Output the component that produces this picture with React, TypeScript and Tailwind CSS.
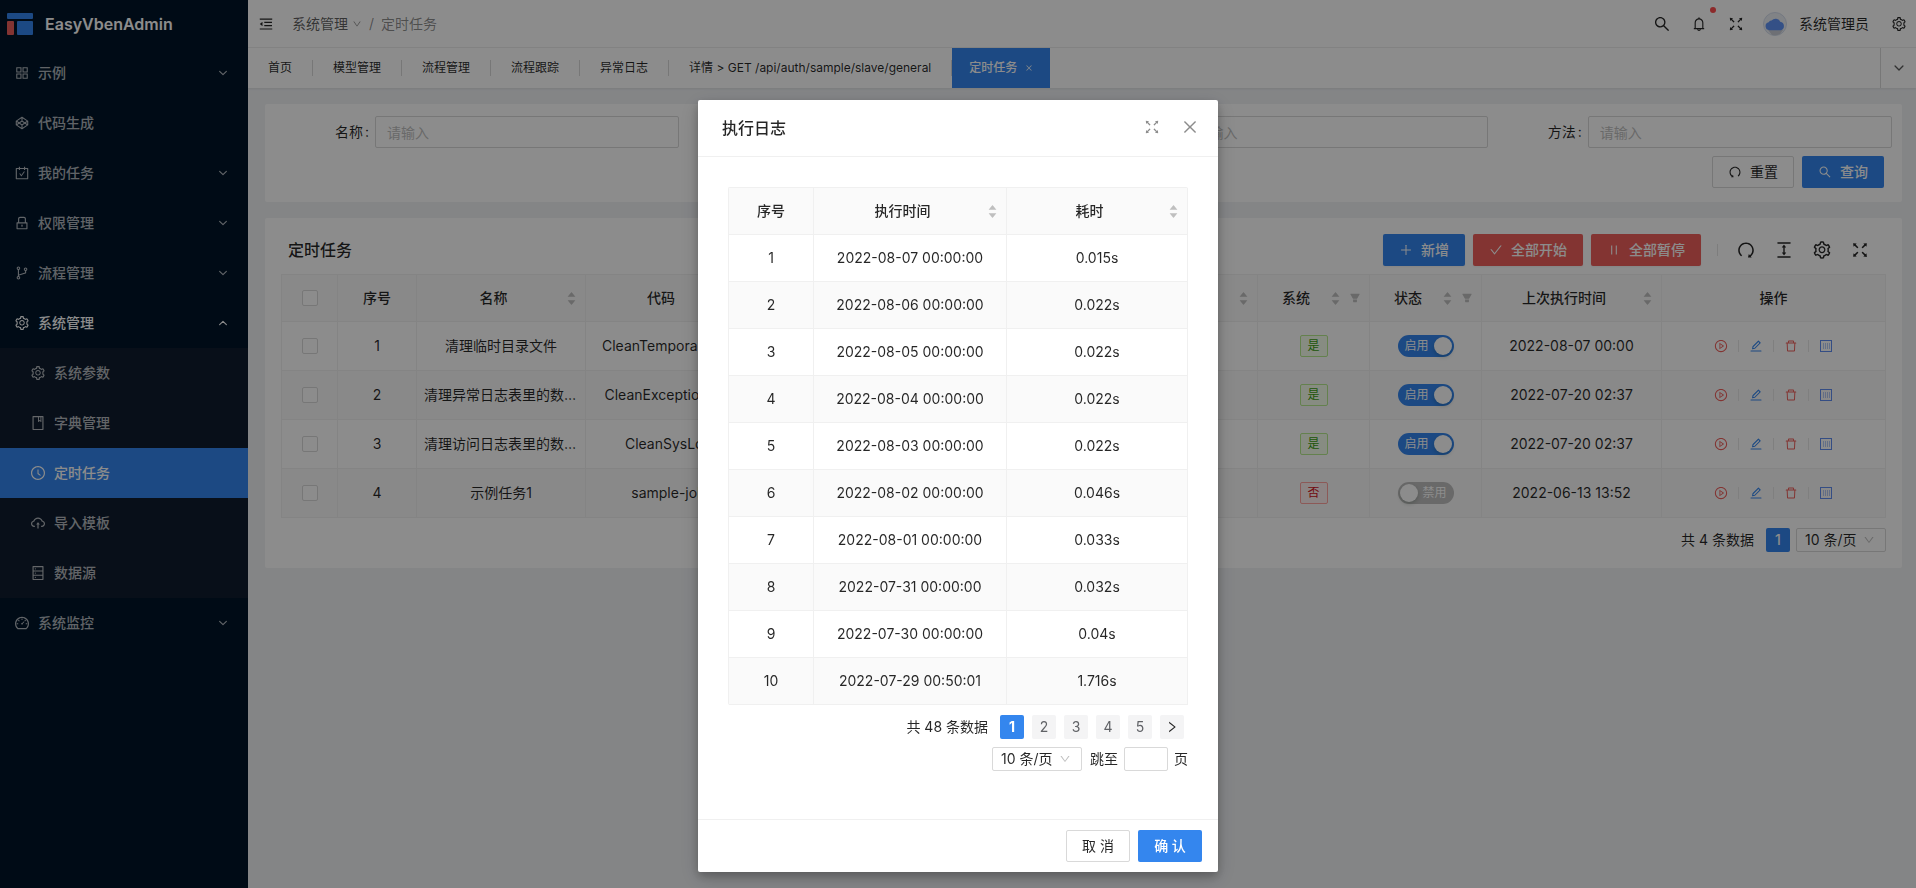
import { useState } from "react";
import type { ReactNode } from "react";
import type { IconType } from "react-icons";
import {
  AiFillCaretDown,
  AiFillCaretUp,
  AiFillFilter,
  AiOutlineAppstore,
  AiOutlineBell,
  AiOutlineBook,
  AiOutlineBranches,
  AiOutlineCarryOut,
  AiOutlineCheck,
  AiOutlineClockCircle,
  AiOutlineClose,
  AiOutlineCloudUpload,
  AiOutlineCodepen,
  AiOutlineColumnHeight,
  AiOutlineDashboard,
  AiOutlineDatabase,
  AiOutlineDelete,
  AiOutlineDown,
  AiOutlineEdit,
  AiOutlineFullscreen,
  AiOutlineLock,
  AiOutlineMenuFold,
  AiOutlinePause,
  AiOutlinePlayCircle,
  AiOutlinePlus,
  AiOutlineRedo,
  AiOutlineRight,
  AiOutlineSearch,
  AiOutlineSetting,
  AiOutlineUndo,
} from "react-icons/ai";
import { IoChevronDown, IoChevronUp } from "react-icons/io5";

type MenuItem = { label: string; icon: IconType; leaf?: boolean; children?: MenuItem[] };

const menu: MenuItem[] = [
  { label: "示例", icon: AiOutlineAppstore },
  { label: "代码生成", icon: AiOutlineCodepen, leaf: true },
  { label: "我的任务", icon: AiOutlineCarryOut },
  { label: "权限管理", icon: AiOutlineLock },
  { label: "流程管理", icon: AiOutlineBranches },
  {
    label: "系统管理",
    icon: AiOutlineSetting,
    children: [
      { label: "系统参数", icon: AiOutlineSetting },
      { label: "字典管理", icon: AiOutlineBook },
      { label: "定时任务", icon: AiOutlineClockCircle },
      { label: "导入模板", icon: AiOutlineCloudUpload },
      { label: "数据源", icon: AiOutlineDatabase },
    ],
  },
  { label: "系统监控", icon: AiOutlineDashboard },
];

const tabs = [
  "首页",
  "模型管理",
  "流程管理",
  "流程跟踪",
  "异常日志",
  "详情 > GET /api/auth/sample/slave/general",
];

const jobs = [
  { name: "清理临时目录文件", code: "CleanTemporaryJob", system: true, enabled: true, last: "2022-08-07 00:00" },
  { name: "清理异常日志表里的数据记录", code: "CleanExceptionLog", system: true, enabled: true, last: "2022-07-20 02:37" },
  { name: "清理访问日志表里的数据记录", code: "CleanSysLog", system: true, enabled: true, last: "2022-07-20 02:37" },
  { name: "示例任务1", code: "sample-job", system: false, enabled: false, last: "2022-06-13 13:52" },
];

const logs = [
  ["2022-08-07 00:00:00", "0.015s"],
  ["2022-08-06 00:00:00", "0.022s"],
  ["2022-08-05 00:00:00", "0.022s"],
  ["2022-08-04 00:00:00", "0.022s"],
  ["2022-08-03 00:00:00", "0.022s"],
  ["2022-08-02 00:00:00", "0.046s"],
  ["2022-08-01 00:00:00", "0.033s"],
  ["2022-07-31 00:00:00", "0.032s"],
  ["2022-07-30 00:00:00", "0.04s"],
  ["2022-07-29 00:50:01", "1.716s"],
];

function Logo() {
  return (
    <svg width="26" height="22" viewBox="0 0 26 22" aria-hidden="true">
      <rect width="26" height="6" rx="1" fill="#3486ee" />
      <rect y="8" width="7" height="14" rx="1" fill="#ee5f5b" />
      <rect x="10" y="8" width="16" height="14" rx="1" fill="#3486ee" />
    </svg>
  );
}

function Avatar() {
  return (
    <svg width="24" height="24" viewBox="0 0 24 24" aria-hidden="true">
      <circle cx="12" cy="12" r="11.5" fill="#eceff5" stroke="#d3dcec" />
      <path d="M5 18h15l-3 4a11 11 0 0 1-8 1z" fill="#c9cdd6" />
      <path
        d="M6.4 18.2a4 4 0 0 1-.7-7.9 2.8 2.8 0 0 1 2.9-1.7 5 5 0 0 1 8.6 1.2 4.3 4.3 0 0 1 .6 8.4z"
        fill="#5f93f5"
      />
    </svg>
  );
}

function LogIcon() {
  return (
    <svg width="14" height="14" viewBox="0 0 14 14" fill="none" stroke="currentColor" aria-hidden="true">
      <rect x="1.5" y="1.5" width="11" height="11" />
      <path d="M4.5 4v6M6.5 4v6M8.5 4v6M10.5 4v6" opacity=".45" />
    </svg>
  );
}

function Sidebar() {
  return (
    <aside className="w-[248px] shrink-0 bg-[#001529] text-white/70">
      <div className="flex h-12 items-center gap-3 pl-[7px] text-base font-semibold text-white">
        <Logo />
        EasyVbenAdmin
      </div>
      <nav>
        {menu.map((item) => (
          <div key={item.label}>
            <a
              href="#"
              className={`flex h-[50px] items-center gap-2 pr-[19px] pl-[14px] font-medium ${item.children ? "text-white" : ""}`}
            >
              <item.icon size={16} />
              <span className="flex-1">{item.label}</span>
              {!item.leaf && (item.children ? <IoChevronUp size={12} /> : <IoChevronDown size={12} />)}
            </a>
            {item.children && (
              <div className="bg-[#0f1d2e]">
                {item.children.map((child) => (
                  <a
                    key={child.label}
                    href="#"
                    className={`flex h-[50px] items-center gap-2 pl-[30px] font-medium ${
                      child.label === "定时任务" ? "bg-[#3486ee] text-white" : ""
                    }`}
                  >
                    <child.icon size={16} />
                    {child.label}
                  </a>
                ))}
              </div>
            )}
          </div>
        ))}
      </nav>
    </aside>
  );
}

function Header() {
  return (
    <header className="flex h-12 items-center border-b border-[#eeeeee] bg-white pr-[9px] pl-[10px]">
      <button aria-label="收起菜单">
        <AiOutlineMenuFold size={16} />
      </button>
      <nav className="ml-[18px] flex items-center gap-[7px]">
        <a href="#" className="flex items-center gap-1 text-black/65">
          系统管理
          <AiOutlineDown size={10} className="text-black/45" />
        </a>
        <span className="text-black/45">/</span>
        <span className="text-black/45">定时任务</span>
      </nav>
      <div className="ml-auto flex items-center">
        <button aria-label="搜索" className="mr-5">
          <AiOutlineSearch size={18} />
        </button>
        <button aria-label="通知" className="relative mr-5">
          <AiOutlineBell size={16} />
          <span className="absolute -top-[9px] -right-[9px] size-[6px] rounded-full bg-[#ff4d4f]" />
        </button>
        <button aria-label="全屏" className="mr-[18px]">
          <AiOutlineFullscreen size={18} />
        </button>
        <button className="mr-[22px] flex items-center gap-3">
          <Avatar />
          系统管理员
        </button>
        <button aria-label="设置">
          <AiOutlineSetting size={16} />
        </button>
      </div>
    </header>
  );
}

function TabBar() {
  return (
    <div className="flex h-10 items-center bg-white text-xs shadow-[0_1px_2px_rgba(0,0,0,0.08)]">
      {tabs.map((tab) => (
        <a key={tab} href="#" className="border-r border-[#d9d9d9] px-5 text-black/85">
          {tab}
        </a>
      ))}
      <a href="#" className="flex h-full items-center gap-2 bg-[#3486ee] px-[17px] font-medium text-white">
        定时任务
        <AiOutlineClose size={8} />
      </a>
      <button aria-label="标签页操作" className="ml-auto grid h-full w-9 place-items-center border-l border-[#d9d9d9] text-black/65">
        <IoChevronDown size={14} />
      </button>
    </div>
  );
}

function Field({ id, label }: { id: string; label: string }) {
  return (
    <div className="flex items-center">
      <label htmlFor={id} className="w-[100px] pr-[6px] text-right">
        {label}<span className="ml-[2px]">:</span>
      </label>
      <input
        id={id}
        placeholder="请输入"
        className="h-8 min-w-0 flex-1 rounded-[2px] border border-[#d9d9d9] bg-white px-[11px] placeholder:text-[#bfbfbf]"
      />
    </div>
  );
}

function SearchForm() {
  return (
    <form className="rounded-[2px] bg-white px-[10px] pt-3 pb-[14px]" onSubmit={(e) => e.preventDefault()}>
      <div className="grid grid-cols-4">
        <Field id="name" label="名称" />
        <Field id="code" label="代码" />
        <Field id="object" label="对象" />
        <Field id="method" label="方法" />
      </div>
      <div className="mt-2 flex justify-end gap-2 pr-2">
        <button type="reset" className="flex h-8 w-[82px] items-center justify-center gap-2 rounded-[2px] border border-[#d9d9d9]">
          <AiOutlineUndo size={14} />
          重置
        </button>
        <button className="flex h-8 w-[82px] items-center justify-center gap-2 rounded-[2px] bg-[#3486ee] font-medium text-white">
          <AiOutlineSearch size={14} />
          查询
        </button>
      </div>
    </form>
  );
}

function HeadCell({ title, sort, filter, className = "" }: { title: string; sort?: boolean; filter?: boolean; className?: string }) {
  return (
    <th className={`border-r border-b border-[#f0f0f0] px-2 font-medium ${className}`}>
      <div className="flex items-center">
        <span className="flex-1 text-center">{title}</span>
        {sort && (
          <span className="ml-1 flex flex-col text-[#bfbfbf]">
            <AiFillCaretUp size={11} />
            <AiFillCaretDown size={11} className="-mt-[3px]" />
          </span>
        )}
        {filter && <AiFillFilter size={12} className="ml-2 text-[#bfbfbf]" />}
      </div>
    </th>
  );
}

function Cell({ children }: { children?: ReactNode }) {
  return <td className="truncate border-r border-b border-[#f0f0f0] px-[7px] text-center">{children}</td>;
}

function Tag({ yes }: { yes: boolean }) {
  return (
    <span
      className={`inline-block h-[22px] w-7 rounded-[2px] border text-xs leading-5 ${
        yes ? "border-[#b7eb8f] bg-[#f6ffed] text-[#389e0d]" : "border-[#ffa39e] bg-[#fff1f0] text-[#cf1322]"
      }`}
    >
      {yes ? "是" : "否"}
    </span>
  );
}

function Switch({ initial }: { initial: boolean }) {
  const [on, setOn] = useState(initial);

  return (
    <button
      role="switch"
      aria-checked={on}
      aria-label="状态"
      onClick={() => setOn(!on)}
      className={`inline-flex h-[22px] w-14 items-center justify-between rounded-full text-xs text-white ${
        on ? "bg-[#3486ee] pr-[2px] pl-[7px]" : "flex-row-reverse bg-[#bfbfbf] pr-[7px] pl-[2px]"
      }`}
    >
      {on ? "启用" : "禁用"}
      <span className="size-[18px] rounded-full bg-white shadow-[0_2px_4px_rgba(0,35,11,0.2)]" />
    </button>
  );
}

function PageSize({ id }: { id: string }) {
  return (
    <div className="relative">
      <select
        id={id}
        aria-label="每页条数"
        className="block h-6 w-[90px] appearance-none rounded-[2px] border border-[#d9d9d9] bg-white pl-2 leading-5"
      >
        <option>10 条/页</option>
        <option>20 条/页</option>
        <option>50 条/页</option>
      </select>
      <AiOutlineDown size={12} className="pointer-events-none absolute top-[6px] right-[11px] text-[#bfbfbf]" />
    </div>
  );
}

function ActionDivider() {
  return <span className="h-3 w-px bg-[#e8e8e8]" />;
}

function JobTable() {
  return (
    <section className="mt-4 rounded-[2px] bg-white px-4 pb-4">
      <div className="flex h-14 items-end gap-2 pb-2 pl-[7px]">
        <h2 className="mr-auto text-base leading-8 font-medium">定时任务</h2>
        <button className="flex h-8 w-[82px] items-center justify-center gap-2 rounded-[2px] bg-[#3486ee] font-medium text-white shadow-xs">
          <AiOutlinePlus size={14} />
          新增
        </button>
        <button className="flex h-8 w-[110px] items-center justify-center gap-2 rounded-[2px] bg-[#ee5f5b] font-medium text-white shadow-xs">
          <AiOutlineCheck size={14} />
          全部开始
        </button>
        <button className="flex h-8 w-[110px] items-center justify-center gap-2 rounded-[2px] bg-[#ee5f5b] font-medium text-white shadow-xs">
          <AiOutlinePause size={14} />
          全部暂停
        </button>
        <div className="ml-2 flex h-8 items-center gap-[18px] pr-4">
          <span className="h-3 w-px bg-[#e4e4e4]" />
          <button aria-label="刷新"><AiOutlineRedo size={20} /></button>
          <button aria-label="密度"><AiOutlineColumnHeight size={20} /></button>
          <button aria-label="列设置"><AiOutlineSetting size={20} /></button>
          <button aria-label="全屏"><AiOutlineFullscreen size={20} /></button>
        </div>
      </div>
      <table className="w-full table-fixed border-separate border-spacing-0 border-t border-l border-[#f0f0f0]">
        <thead className="bg-[#fafafa]">
          <tr className="h-[47px]">
            <th className="w-14 border-r border-b border-[#f0f0f0]">
              <input type="checkbox" aria-label="全选" className="mx-auto block size-4 appearance-none rounded-[2px] border border-[#d9d9d9] bg-white" />
            </th>
            <HeadCell title="序号" className="w-[79px]" />
            <HeadCell title="名称" sort className="w-[169px]" />
            <HeadCell title="代码" sort className="w-[166px]" />
            <HeadCell title="对象" sort />
            <HeadCell title="方法" sort />
            <HeadCell title="表达式" sort />
            <HeadCell title="系统" sort filter className="w-28" />
            <HeadCell title="状态" sort filter className="w-28" />
            <HeadCell title="上次执行时间" sort className="w-[180px]" />
            <HeadCell title="操作" className="w-56" />
          </tr>
        </thead>
        <tbody>
          {jobs.map((job, i) => (
            <tr key={job.code} className="h-[49px] even:bg-[#fafafa]">
              <Cell>
                <input type="checkbox" aria-label={job.name} className="mx-auto block size-4 appearance-none rounded-[2px] border border-[#d9d9d9] bg-white" />
              </Cell>
              <Cell>{i + 1}</Cell>
              <Cell>{job.name}</Cell>
              <Cell>{job.code}</Cell>
              <Cell />
              <Cell />
              <Cell />
              <Cell><Tag yes={job.system} /></Cell>
              <Cell>
                <div className="flex justify-center"><Switch initial={job.enabled} /></div>
              </Cell>
              <Cell>{job.last}</Cell>
              <Cell>
                <div className="flex items-center justify-center gap-[10px]">
                  <button aria-label="执行" className="text-[#ee5f5b]"><AiOutlinePlayCircle size={14} /></button>
                  <ActionDivider />
                  <button aria-label="编辑" className="text-[#3486ee]"><AiOutlineEdit size={14} /></button>
                  <ActionDivider />
                  <button aria-label="删除" className="text-[#ee5f5b]"><AiOutlineDelete size={14} /></button>
                  <ActionDivider />
                  <button aria-label="日志" className="text-[#5f8df0]"><LogIcon /></button>
                </div>
              </Cell>
            </tr>
          ))}
        </tbody>
      </table>
      <div className="mt-[10px] flex items-center justify-end">
        <span className="mr-3">共 4 条数据</span>
        <button className="mr-[6px] h-6 w-6 rounded-[2px] bg-[#3486ee] font-medium text-white">1</button>
        <PageSize id="job-size" />
      </div>
    </section>
  );
}

function LogModal() {
  return (
    <div className="fixed inset-0 flex items-start justify-center overflow-auto bg-black/45 pt-[100px]">
      <div
        role="dialog"
        aria-label="执行日志"
        className="w-[520px] rounded-[2px] bg-white shadow-[0_4px_8px_rgba(0,0,0,0.2),0_6px_20px_rgba(0,0,0,0.19)]"
      >
        <div className="flex h-[57px] items-center border-b border-[#f0f0f0] pr-[19px] pl-6">
          <h3 className="mr-auto text-base font-medium">执行日志</h3>
          <div className="flex items-center gap-5 pb-[3px] text-black/45">
            <button aria-label="全屏"><AiOutlineFullscreen size={18} /></button>
            <button aria-label="关闭"><AiOutlineClose size={18} /></button>
          </div>
        </div>
        <div className="px-[30px] pt-[30px] pb-12">
          <table className="w-full table-fixed border-separate border-spacing-0 rounded-[2px] border-t border-l border-[#f0f0f0]">
            <thead className="bg-[#fafafa]">
              <tr className="h-[47px]">
                <HeadCell title="序号" className="w-[85px]" />
                <HeadCell title="执行时间" sort className="w-[193px]" />
                <HeadCell title="耗时" sort />
              </tr>
            </thead>
            <tbody>
              {logs.map(([time, cost], i) => (
                <tr key={time} className="h-[47px] even:bg-[#fafafa]">
                  <Cell>{i + 1}</Cell>
                  <Cell>{time}</Cell>
                  <Cell>{cost}</Cell>
                </tr>
              ))}
            </tbody>
          </table>
          <div className="mt-[10px] flex items-center justify-end gap-2 pr-1">
            <span className="mr-1">共 48 条数据</span>
            <button className="h-6 w-6 rounded-[2px] bg-[#3486ee] font-bold text-white">1</button>
            {[2, 3, 4, 5].map((page) => (
              <button key={page} className="h-6 w-6 rounded-[2px] bg-[#f4f4f5] text-[#606266]">
                {page}
              </button>
            ))}
            <button aria-label="下一页" className="grid h-6 w-6 place-items-center rounded-[2px] bg-[#f4f4f5]">
              <AiOutlineRight size={14} />
            </button>
          </div>
          <div className="mt-2 flex items-center justify-end">
            <PageSize id="log-size" />
            <label htmlFor="jump" className="mr-[6px] ml-2">跳至</label>
            <input id="jump" className="mr-[6px] h-6 w-11 rounded-[2px] border border-[#d9d9d9] px-2" />
            <span>页</span>
          </div>
        </div>
        <div className="flex justify-end gap-2 border-t border-[#f0f0f0] px-4 py-[10px]">
          <button className="h-8 w-16 rounded-[2px] border border-[#d9d9d9]">取 消</button>
          <button className="h-8 w-16 rounded-[2px] bg-[#3486ee] font-medium text-white">确 认</button>
        </div>
      </div>
    </div>
  );
}

export default function App() {
  return (
    <div className="flex min-h-screen bg-[#f0f2f5] font-[Inter,'Noto_Sans_CJK_SC',sans-serif] text-sm text-black/85">
      <Sidebar />
      <div className="min-w-0 flex-1">
        <Header />
        <TabBar />
        <main className="py-4 pr-[14px] pl-[17px]">
          <SearchForm />
          <JobTable />
        </main>
      </div>
      <LogModal />
    </div>
  );
}
